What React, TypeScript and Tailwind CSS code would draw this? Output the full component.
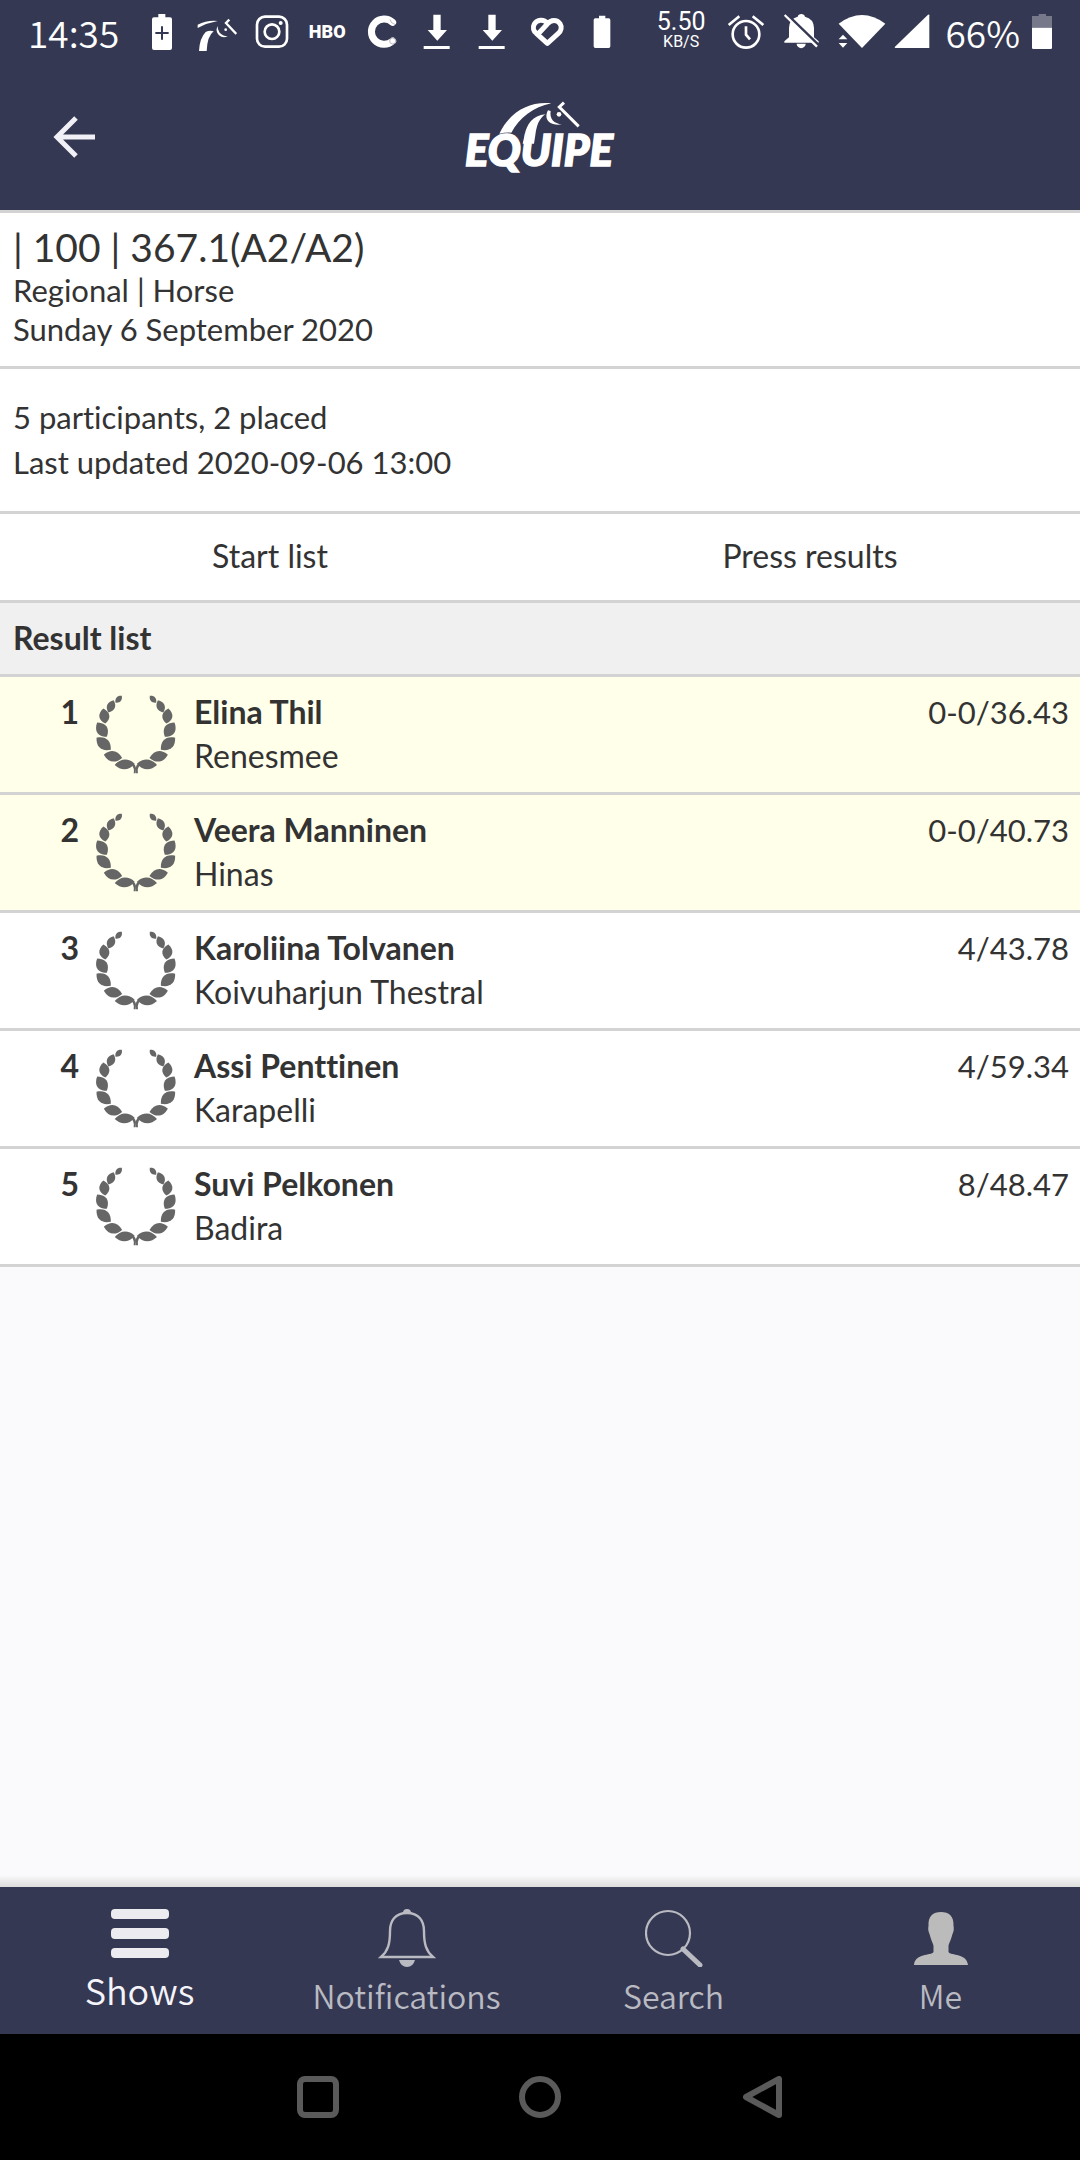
import React, { useState } from "react";

interface Result {
  place: number;
  rider: string;
  horse: string;
  score: string;
  placed: boolean;
}

const results: Result[] = [
  { place: 1, rider: "Elina Thil", horse: "Renesmee", score: "0-0/36.43", placed: true },
  { place: 2, rider: "Veera Manninen", horse: "Hinas", score: "0-0/40.73", placed: true },
  { place: 3, rider: "Karoliina Tolvanen", horse: "Koivuharjun Thestral", score: "4/43.78", placed: false },
  { place: 4, rider: "Assi Penttinen", horse: "Karapelli", score: "4/59.34", placed: false },
  { place: 5, rider: "Suvi Pelkonen", horse: "Badira", score: "8/48.47", placed: false },
];

const StatusIcon: React.FC<{ children: React.ReactNode }> = ({ children }) => (
  <svg className="h-10 w-10 shrink-0" viewBox="0 0 120 120" fill="currentColor" aria-hidden="true">
    {children}
  </svg>
);

const DownloadIcon = () => (
  <StatusIcon>
    <path d="M49 8H71V54H90L61 86L32 54H49Z" />
    <path d="M20 102H98V111H20Z" />
  </StatusIcon>
);

const StatusBar = () => (
  <div className="flex h-[63px] items-center justify-between px-7 font-['Noto_Sans_CJK_SC',sans-serif] font-[350] text-white">
    <div className="flex items-center gap-[15px]">
      <span className="mr-2 text-[37px] leading-10">14:35</span>
      <StatusIcon>
        <path
          fillRule="evenodd"
          d="M49 6H70V16H84Q90 16 90 22V108Q90 114 84 114H36Q30 114 30 108V22Q30 16 36 16H49ZM57 43V60H40V66H57V83H63V66H80V60H63V43Z"
        />
      </StatusIcon>
      <StatusIcon>
        <path d="M2 38Q30 24 62 27Q32 32 2 48Z" />
        <path d="M6 117Q8 78 26 60Q38 54 50 58Q31 72 29 117Z" />
        <path d="M62 42Q54 58 66 70Q78 80 92 73Q76 71 68 62Q61 53 62 42Z" />
        <circle cx="86" cy="53" r="4" />
        <path d="M97 23L87 33L118 66" fill="none" stroke="currentColor" strokeWidth="7" />
      </StatusIcon>
      <StatusIcon>
        <rect x="15" y="14" width="90" height="90" rx="24" fill="none" stroke="currentColor" strokeWidth="8" />
        <circle cx="60" cy="59" r="22" fill="none" stroke="currentColor" strokeWidth="8" />
        <circle cx="86" cy="33" r="6" />
      </StatusIcon>
      <span className="flex w-10 justify-center font-[Roboto,sans-serif] text-[18px] leading-10 font-black">HBO</span>
      <StatusIcon>
        <path d="M92 31A38 38 0 1 0 92 87" fill="none" stroke="currentColor" strokeWidth="21" strokeLinecap="round" />
        <g fill="none" stroke="#353852" strokeWidth="1">
          <path d="M84 22Q86 34 100 38" />
          <circle cx="92" cy="87" r="9" />
        </g>
      </StatusIcon>
      <DownloadIcon />
      <DownloadIcon />
      <StatusIcon>
        <g fill="none" stroke="currentColor" strokeWidth="15" strokeLinejoin="round" strokeLinecap="round">
          <path d="M61 34C50 20 30 23 22 36C16 47 20 58 28 64L61 94L94 64C102 57 106 46 99 35C90 22 72 22 61 36L36 63" />
        </g>
      </StatusIcon>
      <StatusIcon>
        <path d="M51 11H70V19H80Q85 19 85 24V103Q85 108 80 108H40Q35 108 35 103V24Q35 19 40 19H51Z" />
      </StatusIcon>
    </div>
    <div className="flex items-center gap-4">
      <div className="mr-1 mb-1 text-center font-[Roboto,sans-serif] font-normal">
        <div className="text-[25px] leading-6">5.50</div>
        <div className="text-[16px] leading-4">KB/S</div>
      </div>
      <StatusIcon>
        <g fill="none" stroke="currentColor" strokeWidth="8">
          <circle cx="60" cy="67" r="40" />
          <path d="M60 43V68L72 82M8 39L40 13M80 13L112 39" />
        </g>
      </StatusIcon>
      <StatusIcon>
        <path d="M7 92V88L21 76V48Q22 20 47 14Q49 6 58 6Q67 6 69 14Q95 20 96 48V76L110 88V92Z" />
        <path d="M44 95H71A13 13 0 0 1 44 95Z" />
        <path d="M10 3L114 104" stroke="#353852" strokeWidth="9" />
        <path d="M8 9L105 104" stroke="currentColor" strokeWidth="7" />
      </StatusIcon>
      <div className="flex gap-2">
        <svg className="h-10 w-12" viewBox="0 0 144 120" fill="currentColor" aria-hidden="true">
          <path d="M2 35Q72 -17 142 35L72 108Z" />
          <path d="M2 82H28L15 68ZM2 93H28L15 107Z" />
        </svg>
        <svg className="h-10 w-9" viewBox="0 0 108 120" fill="currentColor" aria-hidden="true">
          <path d="M3 104L102 8Q106 6 106 10V108H5Q0 108 3 104Z" />
        </svg>
      </div>
      <div className="flex gap-3">
        <span className="text-[37px] leading-10">66%</span>
        <svg className="h-10 w-5" viewBox="0 0 60 120" fill="currentColor" aria-hidden="true">
          <path d="M20 6H42V12H60V47H0V12H20Z" fill="#77798b" />
          <path d="M0 47H60V107Q60 111 56 111H4Q0 111 0 107Z" />
        </svg>
      </div>
    </div>
  </div>
);

const EquipeLogo = () => (
  <svg className="h-20 w-[152px]" viewBox="342 290 456 240" fill="#fff" role="img" aria-label="Equipe">
    <path d="M448 400C480 335 535 303 604 309C550 320 508 352 484 397Q466 396 448 400Z" />
    <path d="M524 404C530 372 548 346 586 342C566 356 560 376 556 404L552 430H518Z" />
    <path d="M594 330C582 352 592 378 636 372C612 370 598 356 602 332Z" />
    <circle cx="627" cy="342" r="7" />
    <path d="M642 307L628 320L686 378" fill="none" stroke="#fff" strokeWidth="9" />
    <text x="345" y="498" fontFamily="Lato, sans-serif" fontSize="131" fontWeight="900" fontStyle="italic" stroke="#fff" strokeWidth="5">
      EQUIPE
    </text>
  </svg>
);

// cx, cy, length, width, angle for the leaves on the left branch
const leaves = [
  [118, 56, 28, 17, -48],
  [95, 77, 40, 25, -66],
  [75, 106, 46, 31, -98],
  [68, 147, 52, 34, 56],
  [73, 189, 56, 34, 40],
  [101, 227, 56, 32, 10],
  [136, 251, 60, 30, -4],
];

const Branch = () => (
  <>
    {leaves.map(([cx, cy, len, w, angle]) => (
      <path
        key={cy}
        transform={`translate(${cx} ${cy}) rotate(${angle})`}
        d={`M${-len / 2} 0C${-len / 5} ${-w * 0.65} ${len / 5} ${-w * 0.65} ${len / 2} 0C${len / 5} ${w * 0.65} ${-len / 5} ${w * 0.65} ${-len / 2} 0Z`}
      />
    ))}
    <path d="M150 240Q166 246 170 262L169 278H163Q167 258 150 247Z" />
  </>
);

const Wreath = () => (
  <svg className="block h-20 w-20" viewBox="50 40 240 240" fill="#666" aria-hidden="true">
    <Branch />
    <g transform="translate(339 0) scale(-1 1)">
      <Branch />
    </g>
  </svg>
);

const tabs = [
  {
    name: "Shows",
    icon: (
      <svg className="h-[49px] w-[58px]" viewBox="0 0 58 49" fill="#ebebf0" aria-hidden="true">
        <rect width="58" height="10" rx="4" />
        <rect y="19" width="58" height="11" rx="4" />
        <rect y="39" width="58" height="10" rx="4" />
      </svg>
    ),
  },
  {
    name: "Notifications",
    icon: (
      <svg className="h-[58px] w-[58px]" viewBox="0 0 58 58" fill="#b9bac2" aria-hidden="true">
        <path
          d="M29 4C17 4 12 12 12 22C12 35 10 42 3 48H55C48 42 46 35 46 22C46 12 41 4 29 4Z"
          fill="none"
          stroke="#b9bac2"
          strokeWidth="2.4"
        />
        <path d="M25 4Q25 0 29 0Q33 0 33 4Z" />
        <path d="M21 51H37Q35 58 29 58Q23 58 21 51Z" />
      </svg>
    ),
  },
  {
    name: "Search",
    icon: (
      <svg className="h-[58px] w-[58px]" viewBox="0 0 58 58" fill="none" stroke="#b9bac2" aria-hidden="true">
        <circle cx="23" cy="24" r="22" strokeWidth="2.2" />
        <path d="M38 40L55 56" strokeWidth="5" strokeLinecap="round" />
      </svg>
    ),
  },
  {
    name: "Me",
    icon: (
      <svg className="h-[58px] w-[58px]" viewBox="0 0 58 58" fill="#bbb" aria-hidden="true">
        <path d="M29 3C37 3 42 7 41.500 17C42 19 42 22 40.500 25C39 31 37 34 36.500 37V43C39 47 55 44 56 56H2C3 44 19 47 21.500 43V37C21 34 19 31 17.500 25C16 22 16 19 16.500 17C16 7 21 3 29 3Z" />
      </svg>
    ),
  },
];

const App: React.FC = () => {
  const [active, setActive] = useState("Shows");

  return (
    <div className="flex min-h-screen flex-col bg-[#fafafc] font-[Lato,sans-serif] text-[32px] leading-[44px] text-[#333] [font-variant-ligatures:none]">
      <header className="bg-[#353852]">
        <StatusBar />
        <div className="grid h-[147px] grid-cols-3 items-center">
          <button aria-label="Back" className="ml-[53px] w-[42px]">
            <svg viewBox="0 0 42 42" fill="none" stroke="#f0f0f6" strokeWidth="5" aria-hidden="true">
              <path d="M23 2L4 21L23 40M3 21H42" />
            </svg>
          </button>
          <div className="flex justify-center">
            <EquipeLogo />
          </div>
        </div>
      </header>

      <main className="grow">
        <section className="border-y-[3px] border-[#d3d3d3] bg-white px-[13px] pt-2.5 pb-[17px] text-[31px] leading-[39px]">
          <h1 className="text-[39px] leading-[48px]">| 100 | 367.1(A2/A2)</h1>
          <p>Regional | Horse</p>
          <p>Sunday 6 September 2020</p>
        </section>
        <section className="border-b-[3px] border-[#d3d3d3] bg-white px-[13px] py-[26px] text-[31px] leading-[45px]">
          <p>5 participants, 2 placed</p>
          <p>Last updated 2020-09-06 13:00</p>
        </section>
        <div className="grid grid-cols-2 border-b-[3px] border-[#d3d3d3] bg-white">
          <button className="pt-5 pb-[22px]">Start list</button>
          <button className="pt-5 pb-[22px]">Press results</button>
        </div>
        <h2 className="border-b-[3px] border-[#d3d3d3] bg-[#f0f0f0] px-[13px] pt-[13px] pb-3.5 font-bold">Result list</h2>
        <table className="w-full border-separate border-spacing-0">
          <tbody>
            {results.map((r) => (
              <tr
                key={r.place}
                className={
                  r.placed
                    ? "bg-[#ffffea] *:border-b-[3px] *:border-[#d3d3d3] *:align-top"
                    : "bg-white *:border-b-[3px] *:border-[#d3d3d3] *:align-top"
                }
              >
                <td className="w-[79px] pt-[13px] text-right font-bold">{r.place}</td>
                <td className="w-[97px] pt-[17px] pl-[17px]">
                  <Wreath />
                </td>
                <td className="pt-[13px] pb-3.5 pl-[18px]">
                  <div className="font-bold">{r.rider}</div>
                  <div>{r.horse}</div>
                </td>
                <td className="pt-[13px] pr-[11px] text-right text-[31px]">{r.score}</td>
              </tr>
            ))}
          </tbody>
        </table>
      </main>

      <div className="h-3 bg-linear-to-b from-[#fafafc] to-[#dcdcdc]" />
      <nav className="grid grid-cols-4 bg-[#353852] px-1.5 font-['Noto_Sans_CJK_SC',sans-serif] font-[350]">
        {tabs.map((t) => (
          <button
            key={t.name}
            onClick={() => setActive(t.name)}
            className="flex flex-col items-center gap-2 pt-[22px] pb-[19px]"
          >
            {t.icon}
            <span
              className={
                t.name === active
                  ? "text-[36px] leading-[46px] text-[#f4f4fa]"
                  : "text-[32px] leading-10 text-[#b9bac2]"
              }
            >
              {t.name}
            </span>
          </button>
        ))}
      </nav>
      <div className="flex h-[126px] items-center justify-center gap-[180px] bg-black">
        <button aria-label="Recent apps" className="h-[42px] w-[42px] rounded-[8px] border-[6px] border-[#5a5a5a]" />
        <button aria-label="Home" className="h-[42px] w-[42px] rounded-full border-[6px] border-[#5a5a5a]" />
        <button aria-label="Go back" className="h-[42px] w-[42px]">
          <svg viewBox="0 0 42 42" fill="none" stroke="#5a5a5a" strokeWidth="6" strokeLinejoin="round" aria-hidden="true">
            <path d="M38 3V39L5 21Z" />
          </svg>
        </button>
      </div>
    </div>
  );
};

export default App;
